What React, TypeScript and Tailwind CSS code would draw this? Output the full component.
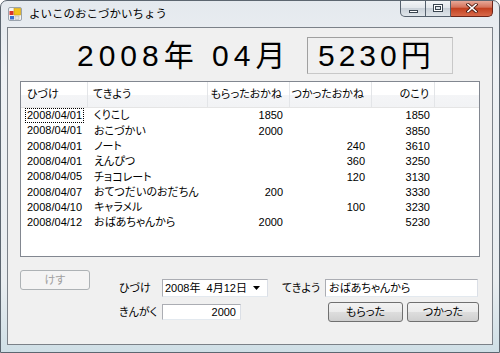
import React from 'react';

const rows: [string, string, string, string, string][] = [
  ['2008/04/01', 'くりこし', '1850', '', '1850'],
  ['2008/04/01', 'おこづかい', '2000', '', '3850'],
  ['2008/04/01', 'ノート', '', '240', '3610'],
  ['2008/04/01', 'えんぴつ', '', '360', '3250'],
  ['2008/04/05', 'チョコレート', '', '120', '3130'],
  ['2008/04/07', 'おてつだいのおだちん', '200', '', '3330'],
  ['2008/04/10', 'キャラメル', '', '100', '3230'],
  ['2008/04/12', 'おばあちゃんから', '2000', '', '5230'],
];

const ui = "font-['Liberation_Sans','Noto_Sans_CJK_JP',sans-serif] [font-feature-settings:'palt'] text-[11px] text-black";

const AppIcon = () => (
  <svg width="14" height="14" viewBox="0 0 14 14">
    <rect x="0.5" y="0.5" width="13" height="13" rx="1.5" fill="#f4f4f4" stroke="#9aa3ad" />
    <rect x="6" y="1.5" width="6.5" height="6.5" fill="#f2c21b" stroke="#c99a08" strokeWidth="0.6" />
    <rect x="1.5" y="4" width="4" height="4" fill="#d9342b" />
    <rect x="2" y="9" width="4" height="3.5" fill="#3b6fd0" />
    <rect x="7" y="9" width="4" height="3.5" fill="#e4e4e4" stroke="#a9a9a9" strokeWidth="0.5" />
  </svg>
);

const CaptionButtons = () => (
  <div className="flex h-[17px]">
    <div className="w-[26px] h-[17px] border border-[#55606d] border-t-0 rounded-bl-[5px] bg-[linear-gradient(#f5f7f9,#e2e6eb_50%,#c9d0d8_51%,#dfe5ea)] flex items-end justify-center pb-[3px]">
      <div className="w-[9px] h-[3px] bg-white border border-[#3a4550]" />
    </div>
    <div className="w-[25px] h-[17px] border-b border-r border-[#55606d] bg-[linear-gradient(#f5f7f9,#e2e6eb_50%,#c9d0d8_51%,#dfe5ea)] flex items-center justify-center">
      <div className="w-[10px] h-[8px] border border-[#3a4550] bg-white flex items-center justify-center">
        <div className="w-[6px] h-[4px] border border-[#3a4550] bg-[#dfe4ea]" />
      </div>
    </div>
    <div className="w-[42px] h-[17px] border-b border-r border-[#6d2418] rounded-br-[5px] bg-[linear-gradient(#eab1a2,#d5735b_45%,#c2401f_52%,#d8694a)] flex items-center justify-center">
      <svg width="12" height="10" viewBox="0 0 12 10">
        <path d="M2 1.5 L10 8.5 M10 1.5 L2 8.5" stroke="#4a1a10" strokeWidth="3.2" strokeLinecap="square" />
        <path d="M2 1.5 L10 8.5 M10 1.5 L2 8.5" stroke="#ffffff" strokeWidth="1.6" strokeLinecap="square" />
      </svg>
    </div>
  </div>
);

const btn = 'h-[20px] rounded-[3px] border border-[#707070] bg-[linear-gradient(#f2f2f2,#ebebeb_50%,#dddddd_51%,#cfcfcf)] flex items-center justify-center';
const field = 'bg-white border border-[#abadb3] border-r-[#dbdfe6] border-b-[#e3e9ef] flex items-center';

export default function App() {
  return (
    <div className="w-[500px] h-[353px] overflow-hidden rounded-t-[7px] border border-[#5c6670] bg-[linear-gradient(180deg,#e4e9ee,#eef1f4_20%,#e9edf0_80%,#cfdfe6)] flex flex-col">
      {/* title bar */}
      <div className="h-[26px] flex items-start justify-between">
        <div className="flex items-center h-[25px] pl-[7px] gap-[7px]">
          <AppIcon />
          <span className="font-['Noto_Sans_CJK_JP',sans-serif] text-[11.5px] text-black">よいこのおこづかいちょう</span>
        </div>
        <div className="mr-[6px] -mt-px">
          <CaptionButtons />
        </div>
      </div>

      {/* client area */}
      <div className={`mx-[6px] h-[318px] border border-[#7b8188] bg-[#f0f0f0] flex flex-col ${ui}`}>
        <div className="mt-[9px] flex items-center pl-[69px] h-[37px]">
          <div className="w-[230px] font-['Liberation_Sans','Noto_Sans_CJK_JP',sans-serif] text-[30px] leading-none tracking-[5px] [font-feature-settings:normal]">
            2008年 04月
          </div>
          <div className="w-[146px] h-[37px] border border-[#a0a0a0] border-b-[#c8c8c8] border-r-[#c8c8c8] flex items-center pl-[10px] font-['Liberation_Sans','Noto_Sans_CJK_JP',sans-serif] text-[30px] leading-none tracking-[4px] [font-feature-settings:normal]">
            5230円
          </div>
        </div>

        {/* list view */}
        <div className="mt-[7px] ml-[12px] w-[460px] h-[176px] border border-[#828790] bg-white">
          <div className="h-[26px] flex items-stretch bg-[linear-gradient(#ffffff,#ffffff_50%,#f4f5f7_51%,#f2f3f5)] border-b border-[#e5e5e5]">
            <div className="w-[67px] pl-[6px] flex items-center border-r border-[#e3e5e8]">ひづけ</div>
            <div className="w-[120px] pl-[5px] flex items-center border-r border-[#e3e5e8]">てきよう</div>
            <div className="w-[82px] pr-[7px] flex items-center justify-end border-r border-[#e3e5e8]">もらったおかね</div>
            <div className="w-[82px] pr-[7px] flex items-center justify-end border-r border-[#e3e5e8]">つかったおかね</div>
            <div className="w-[63px] pr-[5px] flex items-center justify-end border-r border-[#e3e5e8]">のこり</div>
            <div className="flex-1" />
          </div>
          {rows.map((r, i) => (
            <div key={i} className="h-[15.3px] flex items-center">
              <div className="w-[67px] pl-[5px] flex items-center">
                <span className={i === 0 ? 'px-px outline outline-1 outline-dotted outline-black leading-[13px]' : 'px-px leading-[13px]'}>{r[0]}</span>
              </div>
              <div className="w-[120px] pl-[6px] whitespace-nowrap">{r[1]}</div>
              <div className="w-[82px] pr-[7px] text-right">{r[2]}</div>
              <div className="w-[82px] pr-[7px] text-right">{r[3]}</div>
              <div className="w-[63px] pr-[5px] text-right">{r[4]}</div>
            </div>
          ))}
        </div>

        {/* bottom controls */}
        <div className="mt-[13px] flex items-start">
          <div className="ml-[12px] w-[70px] h-[20px] rounded-[3px] border border-[#adb2b5] bg-[#f4f4f4] flex items-center justify-center text-[#a0a0a0]">
            けす
          </div>
          <div className="ml-[29px] mt-[9px] flex flex-col gap-[5px]">
            <div className="flex items-center h-[18px]">
              <div className="w-[43px]">ひづけ</div>
              <div className={`${field} w-[106px] h-[18px] justify-between pl-[2px] pr-[7px]`}>
                <span>2008年&nbsp; 4月12日</span>
                <svg width="7" height="4" viewBox="0 0 7 4"><path d="M0 0 H7 L3.5 4 Z" fill="#000" /></svg>
              </div>
              <div className="ml-[14px] w-[43px]">てきよう</div>
              <div className={`${field} w-[153px] h-[18px] pl-[3px]`}>おばあちゃんから</div>
            </div>
            <div className="flex items-center h-[20px]">
              <div className="w-[43px]">きんがく</div>
              <div className={`${field} w-[79px] h-[16px] justify-end pr-[4px]`}>2000</div>
              <div className={`${btn} ml-[87px] w-[75px]`}>もらった</div>
              <div className={`${btn} ml-[4px] w-[72px]`}>つかった</div>
            </div>
          </div>
        </div>
      </div>
    </div>
  );
}
